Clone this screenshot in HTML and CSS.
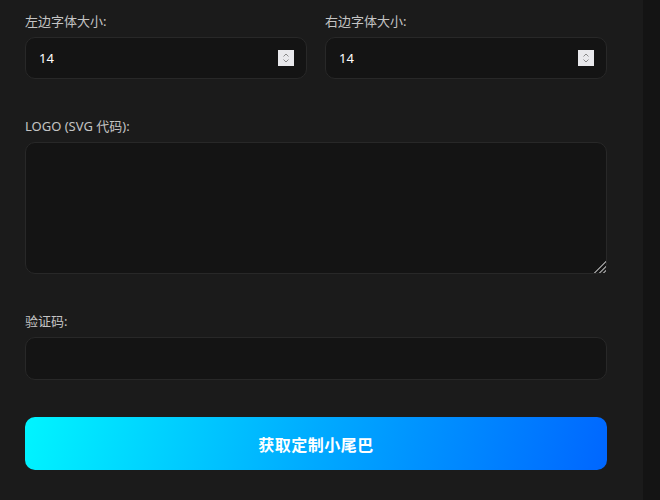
FILE: index.html
```html
<!DOCTYPE html>
<html lang="zh">
<head>
<meta charset="utf-8">
<link rel="stylesheet" href="styles.css">
</head>
<body>
<div class="page">
  <main class="panel">
    <div class="row">
      <div class="group">
        <label class="label">左边字体大小:</label>
        <div class="field num">
          <span class="val">14</span>
          <span class="spin"><svg width="8" height="12" viewBox="0 0 8 12"><path d="M1.5 4.5L4 2l2.5 2.5M1.5 7.5L4 10l2.5-2.5" fill="none" stroke="#8a8a8a" stroke-width="1"/></svg></span>
        </div>
      </div>
      <div class="group">
        <label class="label">右边字体大小:</label>
        <div class="field num">
          <span class="val">14</span>
          <span class="spin"><svg width="8" height="12" viewBox="0 0 8 12"><path d="M1.5 4.5L4 2l2.5 2.5M1.5 7.5L4 10l2.5-2.5" fill="none" stroke="#8a8a8a" stroke-width="1"/></svg></span>
        </div>
      </div>
    </div>
    <div class="group">
      <label class="label">LOGO (SVG 代码):</label>
      <textarea class="field area"></textarea>
    </div>
    <div class="group">
      <label class="label">验证码:</label>
      <input class="field text" type="text">
    </div>
    <button class="btn">获取定制小尾巴</button>
  </main>
  <div class="strip"></div>
</div>
</body>
</html>
```
FILE: styles.css
```css
* { box-sizing: border-box; }
html, body { margin: 0; height: 100%; }
body {
  background: #1b1b1b;
  font-family: "Noto Sans", "Noto Sans CJK SC", sans-serif;
  color: #fff;
  color-scheme: dark;
}
.page { display: flex; min-height: 500px; }
.panel {
  flex: 1;
  padding: 12px 36px 0 25px;
  display: flex;
  flex-direction: column;
}
.strip { width: 17px; background: #141414; }
.row { display: flex; gap: 18px; }
.row .group { flex: 1; }
.group { display: flex; flex-direction: column; margin-bottom: 38px; }
.label {
  font-size: 13px;
  line-height: 18px;
  color: #c4c4c4;
  margin-bottom: 7px;
}
.field {
  background: #141414;
  border: 1px solid #282828;
  border-radius: 10px;
  color: #fff;
  font-family: inherit;
  font-size: 13px;
  outline: none;
}
.num {
  height: 42px;
  display: flex;
  align-items: center;
  justify-content: space-between;
  padding: 0 12px 0 13px;
}
.val { font-size: 13px; }
.spin {
  width: 16px;
  height: 16px;
  background: #e9e9ec;
  display: flex;
  align-items: center;
  justify-content: center;
}
.area {
  height: 132px;
  resize: vertical;
  padding: 10px 13px;
  display: block;
  width: 100%;
}
.area::-webkit-scrollbar { width: 16px; height: 16px; }
.area::-webkit-resizer {
  background:
    linear-gradient(135deg, #141414 52%, transparent 52%),
    repeating-linear-gradient(135deg, transparent 0 2px, #8a8a8a 2px 3.4px);
}
.text {
  height: 43px;
  width: 100%;
  padding: 0 13px;
}
.btn {
  margin-top: -1px;
  height: 53px;
  border: none;
  border-radius: 10px;
  background: linear-gradient(105deg, #00f5ff 0%, #00aaff 50%, #0066ff 100%);
  color: #fff;
  font-family: "Noto Sans CJK SC", sans-serif;
  font-size: 16px;
  font-weight: 700;
  letter-spacing: 0.5px;
}
```
